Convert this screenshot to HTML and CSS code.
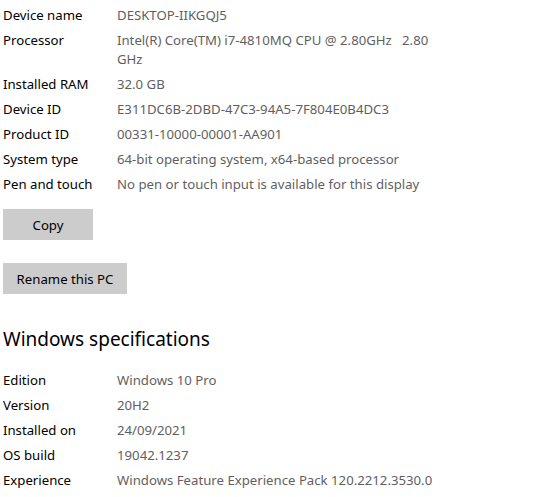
FILE: index.html
```html
<!DOCTYPE html>
<html>
<head>
<meta charset="utf-8">
<link rel="stylesheet" href="styles.css">
</head>
<body>
<div class="page">
  <dl class="specs">
    <div class="row"><dt>Device name</dt><dd>DESKTOP-IIKGQJ5</dd></div>
    <div class="row"><dt>Processor</dt><dd>Intel(R) Core(TM) i7-4810MQ CPU @ 2.80GHz&nbsp;&nbsp;&nbsp;2.80 GHz</dd></div>
    <div class="row"><dt>Installed RAM</dt><dd>32.0 GB</dd></div>
    <div class="row"><dt>Device ID</dt><dd>E311DC6B-2DBD-47C3-94A5-7F804E0B4DC3</dd></div>
    <div class="row"><dt>Product ID</dt><dd>00331-10000-00001-AA901</dd></div>
    <div class="row"><dt>System type</dt><dd>64-bit operating system, x64-based processor</dd></div>
    <div class="row"><dt>Pen and touch</dt><dd>No pen or touch input is available for this display</dd></div>
  </dl>
  <button class="btn btn-copy">Copy</button>
  <button class="btn btn-rename">Rename this PC</button>
  <h2 class="heading">Windows specifications</h2>
  <dl class="specs">
    <div class="row"><dt>Edition</dt><dd>Windows 10 Pro</dd></div>
    <div class="row"><dt>Version</dt><dd>20H2</dd></div>
    <div class="row"><dt>Installed on</dt><dd>24/09/2021</dd></div>
    <div class="row"><dt>OS build</dt><dd>19042.1237</dd></div>
    <div class="row"><dt>Experience</dt><dd>Windows Feature Experience Pack 120.2212.3530.0</dd></div>
  </dl>
</div>
</body>
</html>
```
FILE: styles.css
```css
html, body {
  margin: 0;
  padding: 0;
  background: #ffffff;
}
body {
  font-family: "Noto Sans", "Open Sans", sans-serif;
  font-size: 13.2px;
  color: #000000;
}
.page {
  padding: 6px 0 0 3px;
  display: flex;
  flex-direction: column;
  align-items: flex-start;
}
.specs {
  margin: 0;
  display: flex;
  flex-direction: column;
  gap: 6px;
}
.row {
  display: flex;
  line-height: 19px;
}
dt {
  width: 114px;
  flex: none;
}
dd {
  margin: 0;
  color: #5f5f5f;
  width: 320px;
}
.btn {
  font: inherit;
  color: #000000;
  background: #cccccc;
  border: none;
  height: 31px;
  padding: 0 14px;
}
.btn-copy {
  width: 90px;
  margin-top: 15px;
}
.btn-rename {
  width: 124px;
  padding: 0;
  margin-top: 23px;
}
.heading {
  font-size: 19px;
  font-weight: normal;
  margin: 31px 0 18px 0;
  line-height: 28px;
}
```
